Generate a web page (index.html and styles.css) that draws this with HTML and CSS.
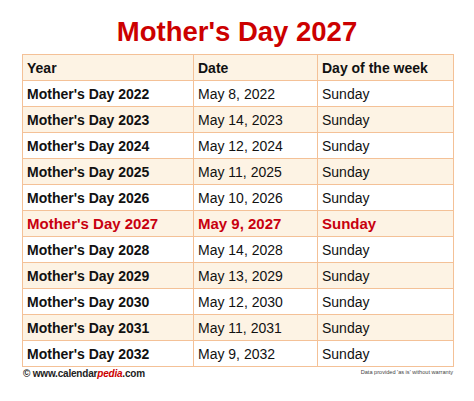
FILE: index.html
```html
<!DOCTYPE html>
<html>
<head>
<meta charset="utf-8">
<link rel="stylesheet" href="styles.css">
</head>
<body>
<div class="page">
  <h1 class="title">Mother's Day 2027</h1>
  <table class="cal">
    <colgroup>
      <col class="c1"><col class="c2"><col class="c3">
    </colgroup>
    <tr class="head"><td>Year</td><td>Date</td><td>Day of the week</td></tr>
    <tr><td class="yr">Mother's Day 2022</td><td>May 8, 2022</td><td>Sunday</td></tr>
    <tr class="alt"><td class="yr">Mother's Day 2023</td><td>May 14, 2023</td><td>Sunday</td></tr>
    <tr><td class="yr">Mother's Day 2024</td><td>May 12, 2024</td><td>Sunday</td></tr>
    <tr class="alt"><td class="yr">Mother's Day 2025</td><td>May 11, 2025</td><td>Sunday</td></tr>
    <tr><td class="yr">Mother's Day 2026</td><td>May 10, 2026</td><td>Sunday</td></tr>
    <tr class="alt cur"><td class="yr">Mother's Day 2027</td><td>May 9, 2027</td><td>Sunday</td></tr>
    <tr><td class="yr">Mother's Day 2028</td><td>May 14, 2028</td><td>Sunday</td></tr>
    <tr class="alt"><td class="yr">Mother's Day 2029</td><td>May 13, 2029</td><td>Sunday</td></tr>
    <tr><td class="yr">Mother's Day 2030</td><td>May 12, 2030</td><td>Sunday</td></tr>
    <tr class="alt"><td class="yr">Mother's Day 2031</td><td>May 11, 2031</td><td>Sunday</td></tr>
    <tr><td class="yr">Mother's Day 2032</td><td>May 9, 2032</td><td>Sunday</td></tr>
  </table>
  <div class="foot">
    <div class="brand">© www.calendar<span class="pedia">pedia</span>.com</div>
    <div class="note">Data provided 'as is' without warranty</div>
  </div>
</div>
</body>
</html>
```
FILE: styles.css
```css
html, body {
  margin: 0;
  padding: 0;
  background: #ffffff;
}
.page {
  width: 430px;
  padding: 16px 22px 0 22px;
  font-family: "Liberation Sans", Arial, sans-serif;
  color: #111111;
}
.title {
  margin: 0 0 6px 0;
  text-align: center;
  font-size: 27.5px;
  line-height: 32px;
  font-weight: bold;
  color: #cc0000;
}
.cal {
  width: 431px;
  border-collapse: collapse;
  table-layout: fixed;
}
.c1 { width: 171px; }
.c2 { width: 124px; }
.c3 { width: 136px; }
.cal td {
  border: 1px solid #f4c197;
  height: 25px;
  padding: 0 4px;
  font-size: 14px;
  line-height: 16px;
  vertical-align: middle;
  white-space: nowrap;
}
.cal .head td {
  background: #fdf3e4;
  font-weight: bold;
}
.cal .alt td {
  background: #fdf3e4;
}
.cal .yr {
  font-weight: bold;
}
.cal .cur td {
  color: #c8000f;
  font-weight: bold;
  font-size: 15px;
}
.foot {
  display: flex;
  justify-content: space-between;
  align-items: flex-start;
  width: 431px;
}
.brand {
  font-size: 10px;
  line-height: 12px;
  font-weight: bold;
  letter-spacing: -0.2px;
  color: #222222;
  padding: 1px 0 0 1px;
}
.pedia {
  color: #cc0000;
  font-style: italic;
}
.note {
  font-size: 5.6px;
  line-height: 8px;
  color: #444444;
  padding-top: 1px;
}
```
